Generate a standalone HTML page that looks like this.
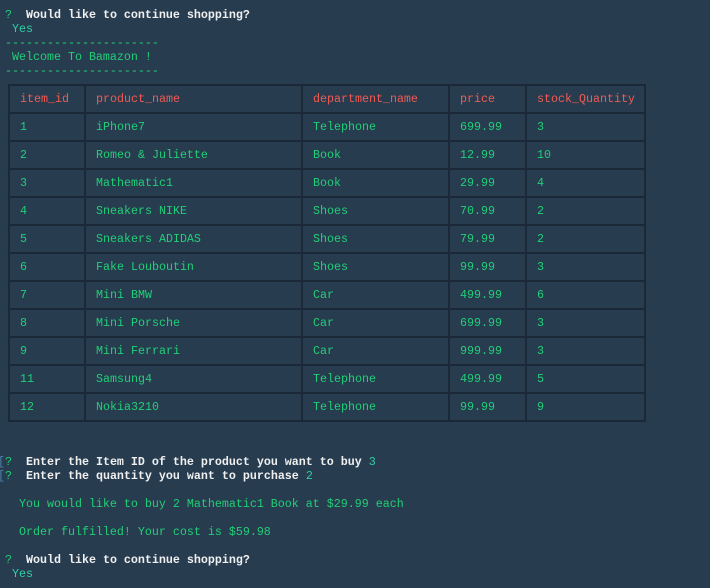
<!DOCTYPE html>
<html><head><style>
body{margin:0;width:710px;height:588px;background:#283c50;overflow:hidden;font-family:"Liberation Mono",monospace;font-size:11.67px;}
.l{position:absolute;left:5px;white-space:pre;line-height:14px;height:14px;top:0}
.g{color:#20cf76}.w{color:#f0f0f0;font-weight:bold}.y{color:#2fd1a4}.b{color:#4a7fa8}
table{position:absolute;left:8px;top:84px;border-collapse:collapse;}
tr{height:28px}
td{border:2px solid #1b2838;padding:0 0 0 10px;color:#20cf76;white-space:pre;vertical-align:middle;box-sizing:border-box;line-height:14px}
tr.h td{color:#f25a52}
</style></head><body>
<div class="l" style="top:8px"><span class="g">?</span>  <span class="w">Would like to continue shopping?</span></div>
<div class="l y" style="top:22px"> Yes</div>
<div class="l g" style="top:36px">----------------------</div>
<div class="l g" style="top:50px"> Welcome To Bamazon !</div>
<div class="l g" style="top:64px">----------------------</div>
<table>
<tr class="h"><td style="width:76px">item_id</td><td style="width:217px">product_name</td><td style="width:147px">department_name</td><td style="width:77px">price</td><td style="width:119px">stock_Quantity</td></tr>
<tr><td>1</td><td>iPhone7</td><td>Telephone</td><td>699.99</td><td>3</td></tr>
<tr><td>2</td><td>Romeo &amp; Juliette</td><td>Book</td><td>12.99</td><td>10</td></tr>
<tr><td>3</td><td>Mathematic1</td><td>Book</td><td>29.99</td><td>4</td></tr>
<tr><td>4</td><td>Sneakers NIKE</td><td>Shoes</td><td>70.99</td><td>2</td></tr>
<tr><td>5</td><td>Sneakers ADIDAS</td><td>Shoes</td><td>79.99</td><td>2</td></tr>
<tr><td>6</td><td>Fake Louboutin</td><td>Shoes</td><td>99.99</td><td>3</td></tr>
<tr><td>7</td><td>Mini BMW</td><td>Car</td><td>499.99</td><td>6</td></tr>
<tr><td>8</td><td>Mini Porsche</td><td>Car</td><td>699.99</td><td>3</td></tr>
<tr><td>9</td><td>Mini Ferrari</td><td>Car</td><td>999.99</td><td>3</td></tr>
<tr><td>11</td><td>Samsung4</td><td>Telephone</td><td>499.99</td><td>5</td></tr>
<tr><td>12</td><td>Nokia3210</td><td>Telephone</td><td>99.99</td><td>9</td></tr>
</table>
<div class="l" style="top:455px;left:-2px"><span class="b">[</span><span class="g">?</span>  <span class="w">Enter the Item ID of the product you want to buy</span> <span class="y">3</span></div>
<div class="l" style="top:469px;left:-2px"><span class="b">[</span><span class="g">?</span>  <span class="w">Enter the quantity you want to purchase</span> <span class="y">2</span></div>
<div class="l g" style="top:497px">  You would like to buy 2 Mathematic1 Book at $29.99 each</div>
<div class="l g" style="top:525px">  Order fulfilled! Your cost is $59.98</div>
<div class="l" style="top:553px"><span class="g">?</span>  <span class="w">Would like to continue shopping?</span></div>
<div class="l y" style="top:567px"> Yes</div>
</body></html>
